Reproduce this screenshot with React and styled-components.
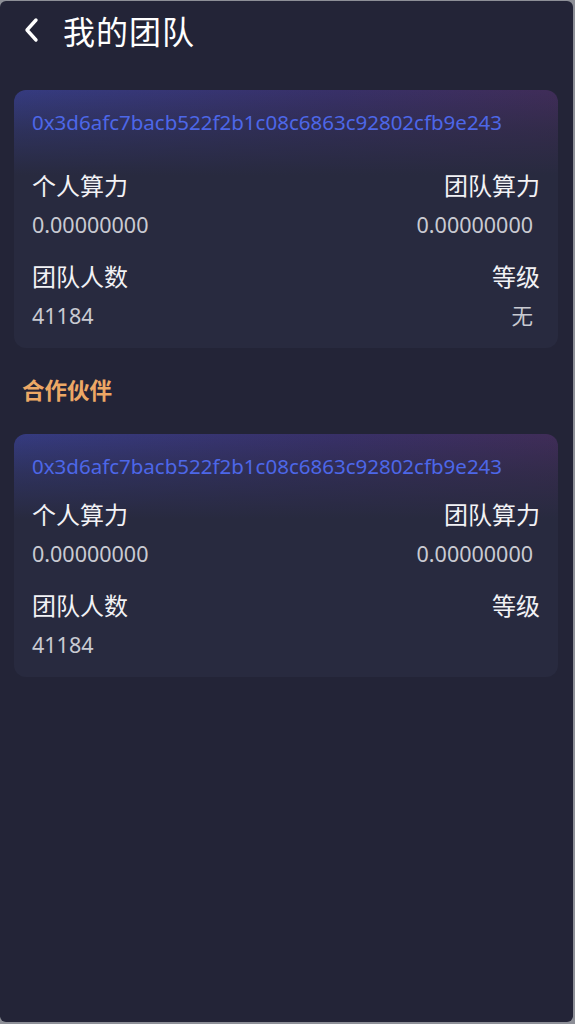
import React from 'react';
import styled, { createGlobalStyle } from 'styled-components';

const GlobalStyle = createGlobalStyle`
  html, body {
    margin: 0;
    padding: 0;
    background: #8d8f97;
  }
  * {
    box-sizing: border-box;
  }
`;

const Page = styled.div`
  width: 573px;
  height: 1021px;
  margin-top: 1px;
  background: #232437;
  border-radius: 6px;
  overflow: hidden;
  font-family: "Noto Sans", "Noto Sans CJK SC", sans-serif;
`;

const Header = styled.div`
  display: flex;
  align-items: center;
  height: 58px;
  padding-left: 22px;
  color: #ffffff;
`;

const BackIcon = styled.svg`
  width: 22px;
  height: 26px;
  margin-right: 19px;
`;

const Title = styled.div`
  font-family: "Noto Sans CJK SC", sans-serif;
  font-size: 32px;
  line-height: 40px;
  letter-spacing: 1px;
`;

const Content = styled.div`
  padding: 31px 15px 0 14px;
`;

const Card = styled.div`
  border-radius: 12px;
  padding: 19px 18px 18px 18px;
  background:
    linear-gradient(180deg, rgba(40, 42, 63, 0) 0px, rgba(40, 42, 63, 0.55) 40px, #282a3f 85px),
    linear-gradient(100deg, #353b80 0%, #383068 55%, #412c55 100%);
`;

const Address = styled.div`
  font-size: 20.5px;
  line-height: 26px;
  color: #4d67e8;
  margin-bottom: ${p => (p.$tight ? '19px' : '34px')};
`;

const Stats = styled.div`
  display: grid;
  grid-template-columns: 1fr 1fr;
  row-gap: 21px;
`;

const Stat = styled.div`
  display: flex;
  flex-direction: column;
  align-items: ${p => (p.$right ? 'flex-end' : 'flex-start')};
`;

const Label = styled.div`
  font-family: "Noto Sans CJK SC", sans-serif;
  font-size: 24px;
  line-height: 32px;
  color: #f2f2f5;
`;

const Value = styled.div`
  margin-top: 10px;
  font-size: 21.5px;
  line-height: 28px;
  height: 28px;
  color: #c9cad2;
  padding-right: ${p => (p.$right ? '7px' : '0')};
  font-family: "Noto Sans", "Noto Sans CJK SC", sans-serif;
`;

const Section = styled.div`
  margin: 26px 0 30px 8px;
  font-family: "Noto Sans CJK SC", sans-serif;
  font-weight: 700;
  font-size: 22.5px;
  line-height: 30px;
  color: #eda865;
`;

const members = [
  {
    address: '0x3d6afc7bacb522f2b1c08c6863c92802cfb9e243',
    personal: '0.00000000',
    team: '0.00000000',
    count: '41184',
    level: '无',
  },
];

const partners = [
  {
    address: '0x3d6afc7bacb522f2b1c08c6863c92802cfb9e243',
    personal: '0.00000000',
    team: '0.00000000',
    count: '41184',
    level: '',
  },
];

function InfoCard({ data, tight }) {
  return (
    <Card>
      <Address $tight={tight}>{data.address}</Address>
      <Stats>
        <Stat>
          <Label>个人算力</Label>
          <Value>{data.personal}</Value>
        </Stat>
        <Stat $right>
          <Label>团队算力</Label>
          <Value $right>{data.team}</Value>
        </Stat>
        <Stat>
          <Label>团队人数</Label>
          <Value>{data.count}</Value>
        </Stat>
        <Stat $right>
          <Label>等级</Label>
          <Value $right>{data.level}</Value>
        </Stat>
      </Stats>
    </Card>
  );
}

export default function App() {
  return (
    <>
      <GlobalStyle />
      <Page>
        <Header>
          <BackIcon viewBox="0 0 22 26">
            <polyline points="14,3 5,13 14,23" fill="none" stroke="#ffffff" strokeWidth="3.4" strokeLinecap="round" strokeLinejoin="round" />
          </BackIcon>
          <Title>我的团队</Title>
        </Header>
        <Content>
          {members.map((m, i) => <InfoCard key={i} data={m} />)}
          <Section>合作伙伴</Section>
          {partners.map((m, i) => <InfoCard key={i} data={m} tight />)}
        </Content>
      </Page>
    </>
  );
}
